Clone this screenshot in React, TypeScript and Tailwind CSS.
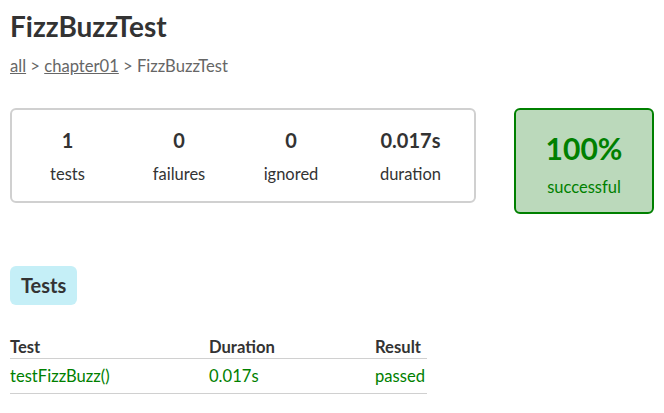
import React from 'react';

const counters = [
  { value: '1', label: 'tests', width: 'w-[111px]' },
  { value: '0', label: 'failures', width: 'w-[112px]' },
  { value: '0', label: 'ignored', width: 'w-[112px]' },
  { value: '0.017s', label: 'duration', width: 'w-[127px]' },
];

function App() {
  return (
    <div className="min-h-screen bg-white px-[10px] pt-[6px] text-[#333] font-['Lato','Open_Sans',sans-serif]">
      <h1 className="text-[28px] font-bold leading-[40px]">FizzBuzzTest</h1>

      <div className="mt-[10px] text-[16.6px] leading-[20px] text-[#666]">
        <a className="underline">all</a> &gt; <a className="underline">chapter01</a> &gt; FizzBuzzTest
      </div>

      {/* Summary */}
      <div className="mt-[32px] flex items-start">
        <div className="flex h-[95px] w-[466px] items-center rounded-[6px] border-2 border-[#d0d0d0]">
          {counters.map((c) => (
            <div key={c.label} className={`${c.width} flex flex-col items-center`}>
              <div className="text-[20px] font-bold leading-[24px]">{c.value}</div>
              <div className="mt-[12px] text-[16.5px] leading-[20px]">{c.label}</div>
            </div>
          ))}
        </div>

        <div className="ml-[38px] flex h-[106px] w-[144px] flex-col items-center rounded-[6px] border-2 border-[#008000] bg-[#bbd9bb] pt-[21px] text-[#008000]">
          <div className="text-[30px] font-bold leading-[34px]">100%</div>
          <div className="mt-[12px] text-[16.5px] leading-[20px]">successful</div>
        </div>
      </div>

      {/* Tabs */}
      <div className="mt-[52px] inline-block rounded-[6px] bg-[#c5eff7] px-[11px] py-[8px] text-[20px] font-bold leading-[23px]">
        Tests
      </div>

      {/* Table */}
      <div className="mt-[32px] w-[417px] text-[16.6px]">
        <div className="grid h-[22px] grid-cols-[199px_166px_1fr] border-b border-[#d0d0d0] font-bold leading-[20px]">
          <div>Test</div>
          <div>Duration</div>
          <div>Result</div>
        </div>
        <div className="grid h-[35px] grid-cols-[199px_166px_1fr] items-center border-b border-[#d0d0d0] leading-[20px] text-[#008000]">
          <div>testFizzBuzz()</div>
          <div>0.017s</div>
          <div>passed</div>
        </div>
      </div>
    </div>
  );
}

export default App;
